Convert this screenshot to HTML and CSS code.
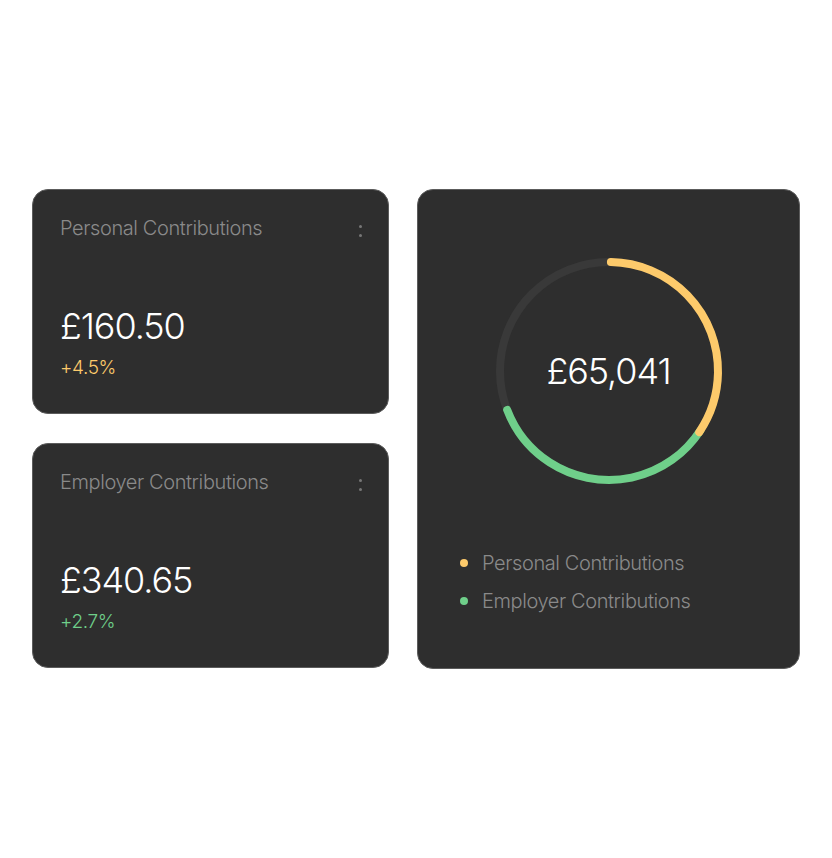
FILE: index.html
```html
<!DOCTYPE html>
<html lang="en">

<head>
    <meta charset="UTF-8">
    <meta name="viewport" content="width=device-width, initial-scale=1.0">
    <title>Contributions</title>
    <link rel="stylesheet" href="styles.css">
</head>

<body>
    <div class="dashboard">
        <div class="stack">
            <div class="card stat">
                <div class="stat-head">
                    <span class="stat-title">Personal Contributions</span>
                    <span class="kebab"><i></i><i></i></span>
                </div>
                <div class="stat-value">£160.50</div>
                <div class="stat-change yellow">+4.5%</div>
            </div>
            <div class="card stat">
                <div class="stat-head">
                    <span class="stat-title">Employer Contributions</span>
                    <span class="kebab"><i></i><i></i></span>
                </div>
                <div class="stat-value">£340.65</div>
                <div class="stat-change green">+2.7%</div>
            </div>
        </div>

        <div class="card total">
            <div class="donut">
                <svg width="230" height="230" viewBox="0 0 230 230">
                    <circle cx="115" cy="115" r="109" fill="none" stroke="#393939" stroke-width="8" />
                    <!-- green: 123deg to 249deg, yellow: 0deg to 123deg -->
                    <circle cx="115" cy="115" r="109" fill="none" stroke="#6fcf8a" stroke-width="8"
                        stroke-linecap="round" stroke-dasharray="239.7 1000"
                        transform="rotate(33 115 115)" />
                    <circle cx="115" cy="115" r="109" fill="none" stroke="#fdca6b" stroke-width="8"
                        stroke-linecap="round" stroke-dasharray="234 1000"
                        transform="rotate(-89 115 115)" />
                </svg>
                <div class="donut-value">£65,041</div>
            </div>
            <ul class="legend">
                <li><span class="dot yellow-bg"></span>Personal Contributions</li>
                <li><span class="dot green-bg"></span>Employer Contributions</li>
            </ul>
        </div>
    </div>
</body>

</html>
```

FILE: styles.css
```css
body {
    font-family: Inter, "Noto Sans", sans-serif;
    margin: 0;
    padding: 0;
    background-color: #fff;
    color: #fff;
}

.dashboard {
    display: flex;
    gap: 28px;
    padding: 189px 0 0 32px;
}

.stack {
    display: flex;
    flex-direction: column;
    gap: 29px;
    width: 357px;
}

.card {
    background-color: #2e2e2e;
    border: 1px solid #5c5c5c;
    border-radius: 16px;
    box-sizing: border-box;
}

.stat {
    height: 225px;
    padding: 26px 26px 0 27px;
}

.stat-head {
    display: flex;
    justify-content: space-between;
    align-items: flex-start;
}

.stat-title {
    font-size: 20px;
    font-weight: 300;
    line-height: 24px;
    letter-spacing: -0.02em;
    color: #8a8a8a;
}

.kebab {
    display: flex;
    flex-direction: column;
    gap: 6px;
    padding-top: 9px;
}

.kebab i {
    display: block;
    width: 3px;
    height: 3px;
    border-radius: 50%;
    background-color: #777;
}

.stat-value {
    margin-top: 64px;
    font-size: 36px;
    font-weight: 300;
    line-height: 44px;
    letter-spacing: -0.03em;
}

.stat-change {
    margin-top: 8px;
    font-size: 19px;
    font-weight: 300;
    line-height: 24px;
    letter-spacing: -0.02em;
}

.yellow {
    color: #fdca6b;
}

.green {
    color: #6fcf8a;
}

.total {
    width: 383px;
    height: 480px;
    padding-top: 66px;
}

.donut {
    position: relative;
    width: 230px;
    height: 230px;
    margin: 0 auto;
}

.donut svg {
    display: block;
}

.donut-value {
    position: absolute;
    inset: 0;
    display: flex;
    align-items: center;
    justify-content: center;
    font-size: 36px;
    font-weight: 300;
    letter-spacing: -0.03em;
}

.legend {
    list-style: none;
    margin: 65px 0 0 0;
    padding: 0 0 0 42px;
}

.legend li {
    display: flex;
    align-items: center;
    gap: 14px;
    font-size: 20px;
    font-weight: 300;
    line-height: 24px;
    letter-spacing: -0.02em;
    color: #8a8a8a;
    margin-bottom: 14px;
}

.dot {
    width: 8px;
    height: 8px;
    border-radius: 50%;
}

.yellow-bg {
    background-color: #fdca6b;
}

.green-bg {
    background-color: #6fcf8a;
}
```
